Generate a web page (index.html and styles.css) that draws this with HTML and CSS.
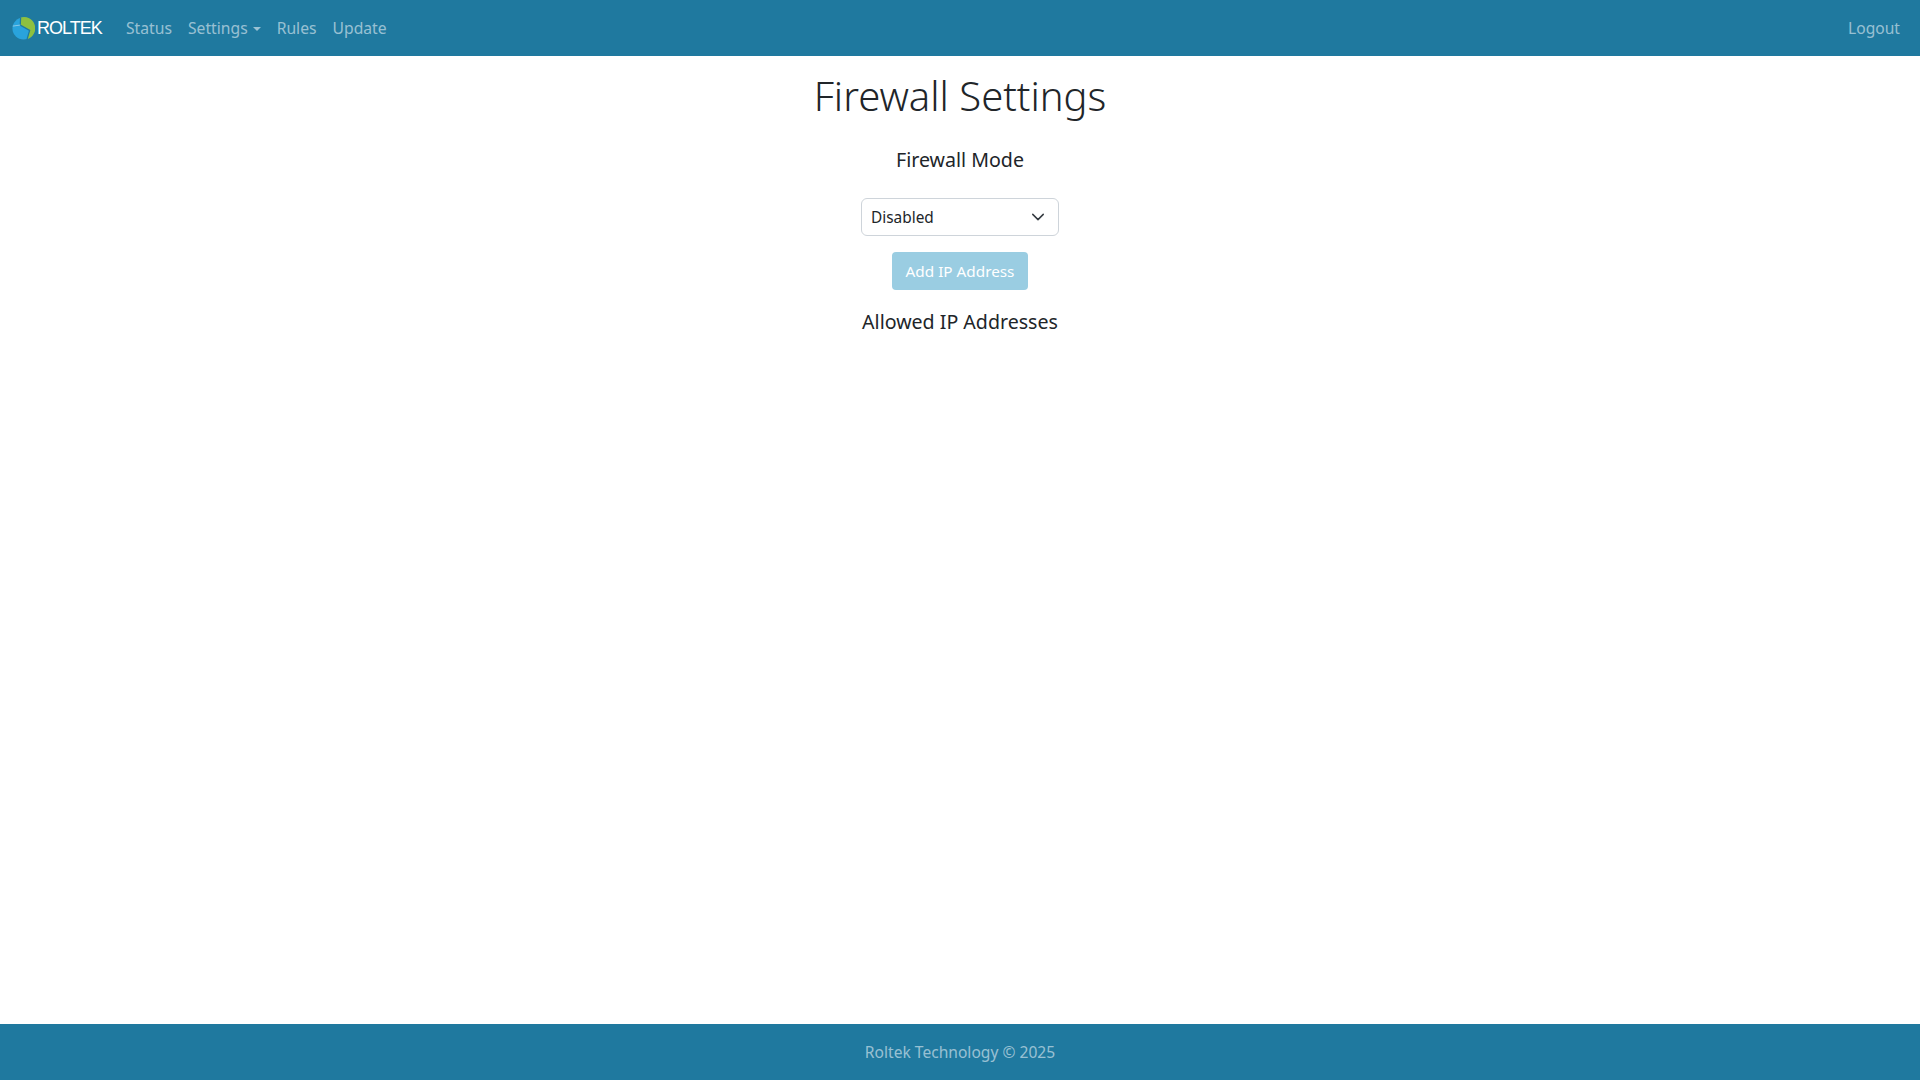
FILE: index.html
```html
<!DOCTYPE html>
<html lang="en">
<head>
  <meta charset="UTF-8">
  <title>Firewall Settings</title>
  <link rel="stylesheet" href="styles.css">
</head>
<body>
<nav class="navbar">
  <a class="brand" href="#">
    <svg class="brand-icon" viewBox="0 0 24 24" width="23" height="23">
      <circle cx="12" cy="12" r="11.5" fill="#29a3dc"/>
      <path d="M9 .6 A11.5 11.5 0 0 1 16 23 L18.5 14 L9 8.5 Z" fill="#8dc03f"/>
      <path d="M9 .6 L8.6 8.4 L18.4 14 L15.8 23" fill="none" stroke="#1f799f" stroke-width="1.3"/>
      <path d="M.8 9.5 L8.6 8.4" fill="none" stroke="#8ccbe8" stroke-width="1"/>
    </svg>
    <span class="brand-text">ROLTEK</span>
  </a>
  <ul class="nav-links">
    <li><a href="#">Status</a></li>
    <li><a href="#" class="dropdown-toggle">Settings</a></li>
    <li><a href="#">Rules</a></li>
    <li><a href="#">Update</a></li>
  </ul>
  <a class="logout" href="#">Logout</a>
</nav>

<main class="content">
  <h1>Firewall Settings</h1>
  <h5 class="mode-title">Firewall Mode</h5>
  <div class="mode-select">
    <span>Disabled</span>
    <svg viewBox="0 0 16 16" width="14" height="14">
      <path d="M2 5l6 6 6-6" fill="none" stroke="#343a40" stroke-width="1.7" stroke-linecap="round" stroke-linejoin="round"/>
    </svg>
  </div>
  <button class="add-btn" disabled>Add IP Address</button>
  <h5 class="allowed-title">Allowed IP Addresses</h5>
</main>

<footer class="footer">Roltek Technology © 2025</footer>
</body>
</html>
```

FILE: styles.css
```css
* {
  box-sizing: border-box;
}
body {
  margin: 0;
  min-height: 1080px;
  display: flex;
  flex-direction: column;
  font-family: "Noto Sans", sans-serif;
  font-size: 16px;
  color: #212529;
  background-color: #fff;
}
a {
  text-decoration: none;
}
.navbar {
  height: 56px;
  flex: none;
  display: flex;
  align-items: center;
  padding: 0 12px;
  background-color: #1f799f;
}
.brand {
  display: flex;
  align-items: center;
  width: 106px;
  color: #fff;
}
.brand-icon {
  display: block;
  flex: none;
}
.brand-text {
  margin-left: 2px;
  font-family: "Liberation Sans", sans-serif;
  font-size: 18px;
  letter-spacing: -1px;
}
.nav-links {
  display: flex;
  list-style: none;
  margin: 0;
  padding: 0;
}
.nav-links a, .logout {
  display: block;
  padding: 8px;
  color: rgba(255,255,255,.55);
  font-size: 15.7px;
}
.logout {
  margin-left: auto;
  font-size: 15.6px;
}
.dropdown-toggle::after {
  content: "";
  display: inline-block;
  margin-left: 5px;
  vertical-align: 3px;
  border-top: 4.5px solid;
  border-left: 4.5px solid transparent;
  border-right: 4.5px solid transparent;
}
.content {
  flex: 1;
  display: flex;
  flex-direction: column;
  align-items: center;
  padding-top: 16px;
}
h1 {
  margin: 0;
  font-size: 40px;
  font-weight: 300;
  line-height: 48px;
}
h5 {
  margin: 0;
  font-size: 19.6px;
  font-weight: 400;
  line-height: 24px;
}
.mode-title {
  margin-top: 28px;
}
.mode-select {
  width: 198px;
  height: 38px;
  margin-top: 26px;
  display: flex;
  align-items: center;
  justify-content: space-between;
  padding: 0 13px 0 9px;
  border: 1px solid #ced4da;
  border-radius: 6px;
  font-size: 15.4px;
}
.add-btn {
  width: 136px;
  height: 38px;
  margin-top: 16px;
  border: none;
  border-radius: 4px;
  background-color: #9acde2;
  color: #fff;
  font-family: inherit;
  font-size: 15.3px;
}
.allowed-title {
  margin-top: 20px;
}
.footer {
  height: 56px;
  flex: none;
  display: flex;
  align-items: center;
  justify-content: center;
  background-color: #1f799f;
  color: rgba(255,255,255,.55);
  font-size: 15.6px;
}
```
